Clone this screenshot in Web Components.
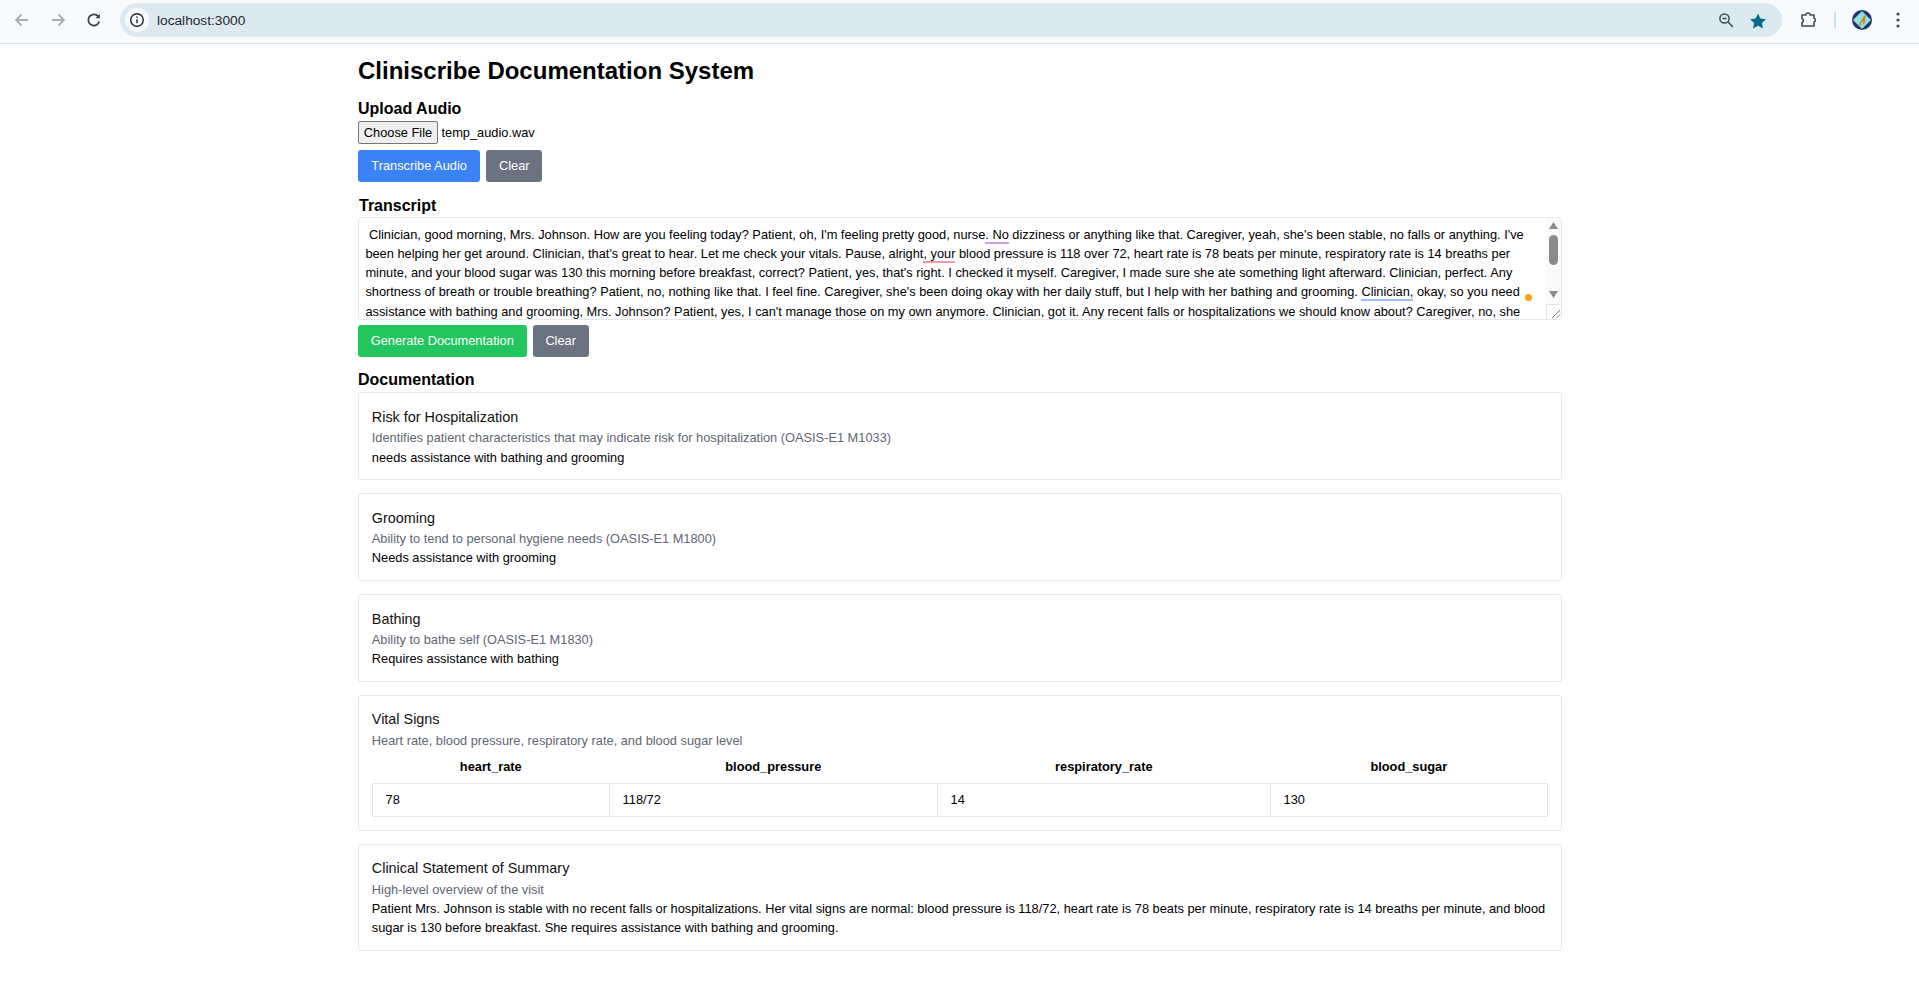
<!DOCTYPE html>
<html lang="en">
<head>
<meta charset="utf-8">
<title>Cliniscribe</title>
<style>
    html, body { margin: 0; padding: 0; background: #fff; }
    body { font-family: "Liberation Sans", Arial, sans-serif; color: #000; overflow: hidden; height: 985px; }
</style>
</head>
<body>
<browser-bar url="localhost:3000"></browser-bar>
<scribe-page>
    <page-title>Cliniscribe Documentation System</page-title>
    <section-heading>Upload Audio</section-heading>
    <file-picker filename="temp_audio.wav"></file-picker>
    <button-row>
        <action-button variant="blue">Transcribe Audio</action-button>
        <action-button variant="gray">Clear</action-button>
    </button-row>
    <section-heading indent style="margin-top:12.8px">Transcript</section-heading>
    <transcript-box></transcript-box>
    <button-row style="margin-top:5px">
        <action-button variant="green">Generate Documentation</action-button>
        <action-button variant="gray">Clear</action-button>
    </button-row>
    <section-heading style="margin-top:12px;margin-bottom:1px">Documentation</section-heading>
    <doc-card heading="Risk for Hospitalization" hint="Identifies patient characteristics that may indicate risk for hospitalization (OASIS-E1 M1033)">needs assistance with bathing and grooming</doc-card>
    <doc-card heading="Grooming" hint="Ability to tend to personal hygiene needs (OASIS-E1 M1800)">Needs assistance with grooming</doc-card>
    <doc-card heading="Bathing" hint="Ability to bathe self (OASIS-E1 M1830)">Requires assistance with bathing</doc-card>
    <doc-card heading="Vital Signs" hint="Heart rate, blood pressure, respiratory rate, and blood sugar level"><vitals-table></vitals-table></doc-card>
    <doc-card heading="Clinical Statement of Summary" hint="High-level overview of the visit">Patient Mrs. Johnson is stable with no recent falls or hospitalizations. Her vital signs are normal: blood pressure is 118/72, heart rate is 78 beats per minute, respiratory rate is 14 breaths per minute, and blood sugar is 130 before breakfast. She requires assistance with bathing and grooming.</doc-card>
</scribe-page>

<script>
(function () {
    function shadow(el, html) {
        el.attachShadow({ mode: "open" });
        el.shadowRoot.innerHTML = html;
    }

    class BrowserBar extends HTMLElement {
        connectedCallback() {
            shadow(this, `
            <style>
                :host { display: flex; align-items: flex-start; box-sizing: border-box; height: 44px; padding-top: 3px; background: #f8fbfd; border-bottom: 1px solid #dbe3e8; font-family: "Liberation Sans", Arial, sans-serif; }
                svg { display: block; flex: none; }
                .navs { display: flex; align-items: center; gap: 16px; height: 34px; padding-left: 12px; }
                .omni { flex: none; width: 1662px; height: 34px; margin-left: 16px; border-radius: 17px; background: #dde9f0; display: flex; align-items: center; }
                .info { width: 24px; height: 24px; margin-left: 5px; border-radius: 50%; background: #f8fbfd; display: flex; align-items: center; justify-content: center; }
                .url { margin-left: 8px; font-size: 13.7px; color: #1f2a30; flex: 1; }
                .zoom { margin-right: 14px; }
                .star { margin-right: 15px; margin-top: 1px; }
                .right { display: flex; align-items: center; height: 34px; }
                .puzzle { margin-left: 17px; }
                .sep { width: 2px; height: 16px; background: #c3e3f3; margin: 0 15px 0 15px; }
                .dots { margin-left: 23px; }
            </style>
            <div class="navs">
                <svg width="20" height="20" viewBox="0 0 20 20" fill="none" stroke="#a9b0b4" stroke-width="1.8"><path d="M16 10H4.5M9.5 4.5 4 10l5.5 5.5"/></svg>
                <svg width="20" height="20" viewBox="0 0 20 20" fill="none" stroke="#a9b0b4" stroke-width="1.8"><path d="M4 10h11.5M10.5 4.5 16 10l-5.5 5.5"/></svg>
                <svg width="20" height="20" viewBox="0 0 20 20" fill="none" stroke="#37474f" stroke-width="1.8"><path d="M15.3 11.5a5.6 5.6 0 1 1-1.1-5.2"/><path d="M15.8 3.8v4.4h-4.4z" fill="#37474f" stroke="none"/></svg>
            </div>
            <div class="omni">
                <div class="info"><svg width="16" height="16" viewBox="0 0 16 16" fill="none" stroke="#20292e" stroke-width="1.4"><circle cx="8" cy="8" r="6.3"/><path d="M8 7.2v4M8 4.5v1.4"/></svg></div>
                <span class="url">${this.getAttribute("url")}</span>
                <svg class="zoom" width="18" height="18" viewBox="0 0 18 18" fill="none" stroke="#3c4a52" stroke-width="1.5"><circle cx="7.5" cy="7.5" r="4.6"/><path d="M11 11 16 16M5.5 7.5h4"/></svg>
                <svg class="star" width="18" height="18" viewBox="0 0 18 18"><path fill="#0b6a8a" d="M9 1.5l2.4 5 5.6.7-4.100 3.800 1.100 5.500L9 13.800l-5 2.700 1.100-5.500L1 7.200l5.600-.7z"/></svg>
            </div>
            <div class="right">
                <svg class="puzzle" width="20" height="20" viewBox="0 0 20 20" fill="none" stroke="#3c4a52" stroke-width="1.6" stroke-linejoin="round"><path d="M3 5h4a2 2 0 0 1 4 0h4v3.300a2 2 0 0 1 0 3.800V16H3v-3.600a2 2 0 0 0 0-3.800z"/></svg>
                <div class="sep"></div>
                <svg width="22" height="22" viewBox="0 0 22 22">
                    <circle cx="11" cy="11" r="10" fill="#27306f"/>
                    <path d="M11 2 20 11 11 20 2 11z" fill="#8fe0dc"/>
                    <path d="M8 16.5c.8-3 1.500-5 3.500-6.500.5-2 1.500-3.500 2.800-4l.5 1.500-.8 2.500c.5 1.500 0 3.500-1 5.500l-1-.5.2-3-1.700 1-.9 3.500z" fill="#d1812a"/>
                </svg>
                <svg class="dots" width="4" height="16" viewBox="0 0 4 16" fill="#3c4a52"><circle cx="2" cy="2" r="1.6"/><circle cx="2" cy="8" r="1.6"/><circle cx="2" cy="14" r="1.6"/></svg>
            </div>`);
        }
    }

    class ScribePage extends HTMLElement {
        connectedCallback() {
            shadow(this, `
            <style>
                :host { display: flex; flex-direction: column; width: 1204px; margin-left: 358px; padding-top: 12.8px; font-size: 12.8px; line-height: 19.2px; font-family: "Liberation Sans", Arial, sans-serif; color: #000; }
            </style>
            <slot></slot>`);
        }
    }

    class PageTitle extends HTMLElement {
        connectedCallback() {
            shadow(this, `
            <style>
                :host { display: block; font-size: 24px; font-weight: 700; line-height: 28.8px; margin-bottom: 12.8px; }
            </style>
            <slot></slot>`);
        }
    }

    class SectionHeading extends HTMLElement {
        connectedCallback() {
            shadow(this, `
            <style>
                :host { display: block; font-size: 16px; font-weight: 700; line-height: 22.4px; }
                :host([indent]) { padding-left: 1px; }
            </style>
            <slot></slot>`);
        }
    }

    class FilePicker extends HTMLElement {
        connectedCallback() {
            shadow(this, `
            <style>
                :host { display: flex; align-items: center; gap: 3.5px; height: 23px; font-size: 12.8px; }
                .btn { box-sizing: border-box; width: 80px; height: 23px; border: 1px solid #767676; border-radius: 2px; background: #efefef; text-align: center; line-height: 21px; color: #000; }
            </style>
            <span class="btn">Choose File</span><span>${this.getAttribute("filename")}</span>`);
        }
    }

    class ButtonRow extends HTMLElement {
        connectedCallback() {
            shadow(this, `
            <style>
                :host { display: flex; gap: 6px; margin-top: 6.4px; }
            </style>
            <slot></slot>`);
        }
    }

    class ActionButton extends HTMLElement {
        connectedCallback() {
            shadow(this, `
            <style>
                :host { display: inline-flex; align-items: center; box-sizing: border-box; height: 32px; padding: 0 12.8px 1px; border-radius: 3.2px; color: #fff; font-size: 12.8px; background: #6b7280; }
                :host([variant="blue"]) { background: #3b82f6; padding: 0 13.3px 1px; }
                :host([variant="green"]) { background: #22c55e; }
            </style>
            <slot></slot>`);
        }
    }

    class TranscriptBox extends HTMLElement {
        connectedCallback() {
            shadow(this, `
            <style>
                :host { display: block; position: relative; box-sizing: border-box; height: 102.6px; border: 1px solid #e5e7eb; border-radius: 3.2px; overflow: hidden; font-size: 12.8px; line-height: 19.2px; }
                .text { box-sizing: border-box; padding: 6.4px 21.4px 0 6.4px; white-space: pre; height: 100%; overflow: hidden; }
                .u { border-bottom: 2px solid; }
                .purple { border-color: #c9a4ea; }
                .pink { border-color: #ee9aa8; }
                .blue { border-color: #9ec2f5; }
                .dot { position: absolute; right: 29.5px; top: 75.5px; width: 7px; height: 7px; border-radius: 50%; background: #f9a11b; }
                .bar { position: absolute; right: 0; top: 0; bottom: 0; width: 15px; background: #fafafa; }
                .bar svg { display: block; }
                .thumb { position: absolute; left: 3px; top: 17px; width: 9px; height: 30px; border-radius: 5px; background: #8b8b8b; }
                .up { position: absolute; left: 3px; top: 4px; }
                .down { position: absolute; left: 3px; top: 73px; }
                .grip { position: absolute; right: 0; bottom: 0; width: 15px; height: 15px; background: #fff; border-left: 1px solid #e5e5e5; border-top: 1px solid #e5e5e5; box-sizing: border-box; }
            </style>
            <div class="text"><div> Clinician, good morning, Mrs. Johnson. How are you feeling today? Patient, oh, I'm feeling pretty good, nurse<span class="u purple">. No</span> dizziness or anything like that. Caregiver, yeah, she's been stable, no falls or anything. I've</div><div>been helping her get around. Clinician, that's great to hear. Let me check your vitals. Pause, alright<span class="u pink">, your</span> blood pressure is 118 over 72, heart rate is 78 beats per minute, respiratory rate is 14 breaths per</div><div>minute, and your blood sugar was 130 this morning before breakfast, correct? Patient, yes, that's right. I checked it myself. Caregiver, I made sure she ate something light afterward. Clinician, perfect. Any</div><div>shortness of breath or trouble breathing? Patient, no, nothing like that. I feel fine. Caregiver, she's been doing okay with her daily stuff, but I help with her bathing and grooming. <span class="u blue">Clinician,</span> okay, so you need</div><div>assistance with bathing and grooming, Mrs. Johnson? Patient, yes, I can't manage those on my own anymore. Clinician, got it. Any recent falls or hospitalizations we should know about? Caregiver, no, she</div></div>
            <div class="dot"></div>
            <div class="bar">
                <svg class="up" width="9" height="7" viewBox="0 0 9 7"><path d="M4.5 0 9 7H0z" fill="#8b8b8b"/></svg>
                <div class="thumb"></div>
                <svg class="down" width="9" height="7" viewBox="0 0 9 7"><path d="M4.5 7 9 0H0z" fill="#8b8b8b"/></svg>
            </div>
            <div class="grip"><svg width="14" height="14" viewBox="0 0 14 14" fill="none" stroke="#777"><path d="M5 13 13 5M9.5 13 13 9.5"/></svg></div>`);
        }
    }

    class DocCard extends HTMLElement {
        connectedCallback() {
            shadow(this, `
            <style>
                :host { display: block; box-sizing: border-box; border: 1px solid #e5e7eb; border-radius: 3.2px; padding: 12.6px 12.8px; margin-bottom: 12.8px; background: #fff; }
                .head { font-size: 14.4px; line-height: 22.4px; color: #111; }
                .hint { color: #5f6672; }
            </style>
            <div class="head">${this.getAttribute("heading")}</div>
            <div class="hint">${this.getAttribute("hint")}</div>
            <div class="body"><slot></slot></div>`);
        }
    }

    class VitalsTable extends HTMLElement {
        connectedCallback() {
            const cols = [["heart_rate", "78", 237], ["blood_pressure", "118/72", 328], ["respiratory_rate", "14", 333], ["blood_sugar", "130", 277]];
            shadow(this, `
            <style>
                :host { display: block; }
                table { border-collapse: collapse; width: 1175px; table-layout: fixed; }
                th { font-weight: 700; text-align: center; height: 32.6px; padding: 0; }
                td { border: 1px solid #e5e7eb; height: 33.6px; padding: 0 12.8px 1px; box-sizing: border-box; }
            </style>
            <table>
                <colgroup>${cols.map(c => `<col style="width:${c[2]}px">`).join("")}</colgroup>
                <tr>${cols.map(c => `<th>${c[0]}</th>`).join("")}</tr>
                <tr>${cols.map(c => `<td>${c[1]}</td>`).join("")}</tr>
            </table>`);
        }
    }

    customElements.define("browser-bar", BrowserBar);
    customElements.define("scribe-page", ScribePage);
    customElements.define("page-title", PageTitle);
    customElements.define("section-heading", SectionHeading);
    customElements.define("file-picker", FilePicker);
    customElements.define("button-row", ButtonRow);
    customElements.define("action-button", ActionButton);
    customElements.define("transcript-box", TranscriptBox);
    customElements.define("doc-card", DocCard);
    customElements.define("vitals-table", VitalsTable);
})();
</script>
</body>
</html>
